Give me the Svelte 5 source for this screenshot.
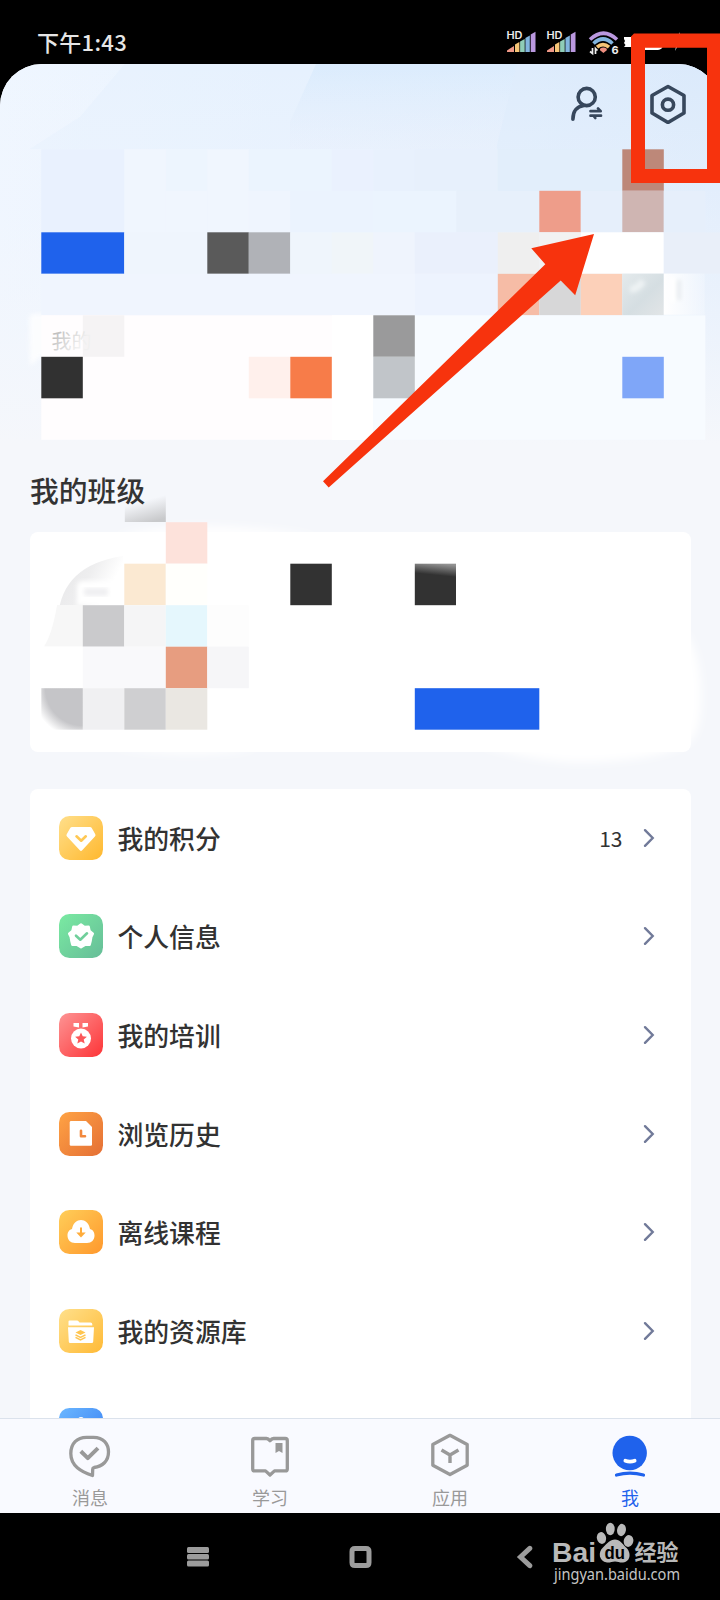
<script>
  const TILE = 41.5;

  // [column, row, columns wide, rows high, colour]
  const headerTiles = [
    [1, 0, 2, 2, "#e9f1fe"],
    [3, 0, 1, 2, "#f0f6fe"],
    [4, 0, 1, 1, "#edf5fe"],
    [4, 1, 1, 1, "#f0f6fe"],
    [5, 0, 1, 2, "#f0f6fe"],
    [6, 0, 2, 1, "#ebf4fe"],
    [6, 1, 1, 1, "#eff5fe"],
    [7, 1, 2, 1, "#ebf3fe"],
    [8, 0, 1, 1, "#eaf1fe"],
    [9, 0, 1, 1, "#e8f1fd"],
    [10, 0, 2, 1, "#e7f0fc"],
    [9, 1, 2, 1, "#ebf4fe"],
    [11, 1, 2, 1, "#e7f0fb"],
    [12, 0, 3, 1, "#e2eefb"],
    [13, 1, 1, 1, "#ee9d8a"],
    [14, 1, 1, 1, "#e6effb"],
    [15, 0, 1, 1, "#bd8879"],
    [15, 1, 1, 1, "#cfb5b2"],
    [16, 1, 1, 1, "#e6effb"],
    [1, 2, 2, 1, "#1f62ec"],
    [3, 2, 2, 1, "#eff5fd"],
    [5, 2, 1, 1, "#5a5a5a"],
    [6, 2, 1, 1, "#b0b2b7"],
    [7, 2, 1, 1, "#eff5fc"],
    [8, 2, 1, 1, "#f0f5f9"],
    [9, 2, 1, 1, "#eff4fd"],
    [10, 2, 2, 1, "#eaf0fc"],
    [12, 2, 1, 1, "#efefef"],
    [13, 2, 1, 1, "#f2f2f2"],
    [14, 2, 2, 1, "#ffffff"],
    [16, 2, 2, 1, "#e9eff9"],
    [1, 3, 9, 1, "#f0f5fe"],
    [10, 3, 2, 1, "#edf3fe"],
    [12, 3, 1, 1, "#f6bca6"],
    [13, 3, 1, 1, "#d7d7d8"],
    [14, 3, 1, 1, "#fcd0b9"],
    [1, 4, 8, 3, "#fffdfe"],
    [8, 4, 1, 3, "#ffffff"],
    [9, 4, 8, 3, "#f7fbff"],
    [2, 4, 1, 1, "#f5f3f4"],
    [9, 4, 1, 1, "#9a9a9b"],
    [1, 5, 1, 1, "#313131"],
    [6, 5, 1, 1, "#fff0ec"],
    [7, 5, 1, 1, "#f77c49"],
    [9, 5, 1, 1, "#c1c5c9"],
    [15, 5, 1, 1, "#7fa6f8"],
  ];

  const classTiles = [
    [4, 0, 1, 1, "#fde2db"],
    [3, 1, 1, 1, "#fbe9d2"],
    [4, 1, 1, 1, "#fffffc"],
    [7, 1, 1, 1, "#323232"],
    [2, 2, 1, 1, "#cacacc"],
    [3, 2, 1, 1, "#f5f5f6"],
    [4, 2, 1, 1, "#e5f7fd"],
    [5, 2, 1, 1, "#fdfdfd"],
    [1, 3, 1, 1, "#ffffff"],
    [2, 3, 2, 1, "#f9f9fb"],
    [4, 3, 1, 1, "#e79d80"],
    [5, 3, 1, 1, "#f6f6f8"],
    [2, 4, 1, 1, "#f0f0f2"],
    [3, 4, 1, 1, "#cfcfd1"],
    [4, 4, 1, 1, "#eae7e2"],
    [10, 4, 3, 1, "#1f62ec"],
  ];

  const menu = [
    { icon: "points", label: "我的积分", value: 13 },
    { icon: "profile", label: "个人信息" },
    { icon: "training", label: "我的培训" },
    { icon: "history", label: "浏览历史" },
    { icon: "offline", label: "离线课程" },
    { icon: "library", label: "我的资源库" },
    { icon: "more", label: "" },
  ];

  const gradients = {
    points: ["#ffdf8b", "#ffb82e"],
    profile: ["#7aeaa2", "#66bd98"],
    training: ["#fd9494", "#fd3437"],
    history: ["#ffa344", "#e46f35"],
    offline: ["#ffce59", "#ff982c"],
    library: ["#ffe08b", "#ffba36"],
    more: ["#6bb7ff", "#357cf2"],
  };

  const tabs = [
    { icon: "message", label: "消息" },
    { icon: "study", label: "学习" },
    { icon: "apps", label: "应用" },
    { icon: "me", label: "我", active: true },
  ];

  const signalX = [507, 547];
</script>

{#snippet tiles(list, top)}
  {#each list as [col, row, w, h, fill]}
    <rect
      x={col * TILE - 0.2}
      y={top + row * TILE}
      width={w * TILE}
      height={h * TILE}
      {fill}
    />
  {/each}
{/snippet}

<div class="screen">
  <header class="status">
    <span>下午1:43</span>
    <svg width="182" height="40" viewBox="504 24 182 40">
      {#each signalX as x}
        <g transform="translate({x} 0)">
          <path fill="#ef9887" d="M0 52v-1.500l7-4.500v6z" />
          <path fill="#f5c577" d="M8 52v-7.500l4.400-2.500v10z" />
          <path fill="#8fcdb7" d="M13.100 52V41.500l4.600-2.500v13z" />
          <path fill="#82b5df" d="M18.400 52V38l4.400-2.500V52z" />
          <path fill="#ba98df" d="M23.700 52V34.500l4.800-2.700V52z" />
          <text class="hd" x="-0.500" y="39" textLength="16" lengthAdjust="spacingAndGlyphs">HD</text>
        </g>
      {/each}
      <g fill="none" stroke-width="3.600">
        <path stroke="#ba98df" d="M590 39.500q13.500-12.500 27 0" />
        <path stroke="#82b5df" d="M593.500 43.500q9.500-9 19 0" />
        <path stroke="#f5c577" d="M597 47.200q6-5.200 12 0" />
      </g>
      <path fill="#ef8f80" d="M600 48.800q3.400-2.400 6.800 0v1.400L603.400 53l-3.400-2.800z" />
      <path
        fill="none"
        stroke="#eee"
        stroke-width="1.700"
        d="M592.500 48v5.500l-2.500-2M595.500 54v-5.500l2 2"
      />
      <text class="wifi-gen" x="611.500" y="53.500">6</text>
      <path fill="#fff" d="M624 37h8v10h-8l1.500-2-1.500-2 1-2-1-2z" />
      <rect x="632" y="35" width="31" height="15" rx="5" fill="#fff" />
      <path fill="#ddd" d="m680 32-6 10h3l-2 9 6-11h-3z" />
    </svg>
  </header>

  <main>
    <svg class="backdrop" width="720" height="1354" viewBox="0 64 720 1354">
      <defs>
        <linearGradient id="sky">
          <stop offset="0" stop-color="#eff6ff" />
          <stop offset="0.5" stop-color="#e7f2fe" />
          <stop offset="1" stop-color="#dceafb" />
        </linearGradient>
        <linearGradient id="sky-fade" x2="0" y2="1">
          <stop offset="0" stop-color="#f5f7fb" stop-opacity="0" />
          <stop offset="0.35" stop-color="#f1f6fe" stop-opacity="0.35" />
          <stop offset="1" stop-color="#f5f7fb" />
        </linearGradient>
        <linearGradient id="band" x2="0" y2="1">
          <stop offset="0" stop-color="#dbecfd" />
          <stop offset="1" stop-color="#e5eefc" stop-opacity="0.6" />
        </linearGradient>
        <linearGradient id="smudge" x2="1">
          <stop offset="0" stop-color="#fff" />
          <stop offset="1" stop-color="#fff" stop-opacity="0.2" />
        </linearGradient>
        <linearGradient id="silver" x2="1" y2="1">
          <stop offset="0" stop-color="#e4eaec" />
          <stop offset="0.55" stop-color="#d5dee2" />
          <stop offset="1" stop-color="#e2e5e7" />
        </linearGradient>
        <linearGradient id="text-fade" x2="1" y2="0.6">
          <stop offset="0" stop-color="#b0b0b0" />
          <stop offset="0.8" stop-color="#f0f0f0" />
        </linearGradient>
        <filter id="soft-small"><feGaussianBlur stdDeviation="2" /></filter>
      </defs>
      <rect y="64" width="720" height="380" fill="url(#sky)" />
      <path fill="#e3effd" opacity="0.5" d="M125 64h191l-26 58v27H30L80 117z" />
      <path fill="url(#band)" d="M316 64h201l-20 80v5H290v-27z" />
      <path fill="#d9e9fc" opacity="0.5" d="M517 64h203v127H497v-46z" />
      <rect y="64" width="720" height="380" fill="url(#sky-fade)" />
      <path
        fill="#fff"
        d="M29.500 318q0-4 4-4H120v42H41l-11 10z"
        filter="url(#soft-small)"
        opacity="0.8"
      />
      {@render tiles(headerTiles, 149.3)}
      <rect x="622.300" y="273.600" width="41.500" height="41.500" fill="url(#silver)" />
      <rect x="663.800" y="273.600" width="41" height="41.200" fill="url(#smudge)" />
      <g filter="url(#soft-small)">
        <path stroke="#fff" stroke-width="6" d="M673 278v24" />
        <path stroke="#e0e5e9" stroke-width="3" d="M679 280v20" />
        <path stroke="#eef3f4" stroke-width="7" d="M630 289q7 1 13-8" fill="none" />
      </g>
      <text class="ghost" x="51.500" y="349" fill="url(#text-fade)">我的</text>
    </svg>

    <div class="toolbar">
      <svg width="40" height="40" viewBox="567 84 40 40" class="line">
        <circle cx="586.700" cy="97" r="8.600" />
        <path d="M572.900 119.300c0-8 4-13 11-13.800" />
        <path
          stroke-width="2.700"
          d="M590.500 111.200h10.200l-2.700-2.800M601 115.700h-10.500M593.500 115.700l1.800 2.300"
        />
      </svg>
      <svg width="40" height="40" viewBox="648 84 40 40" class="line">
        <path d="m668 86.500 16 9V113l-16 9.500-16-9.500V95.500z" />
        <circle cx="668" cy="104.700" r="5.600" />
      </svg>
    </div>

    <h2>我的班级</h2>

    <section class="class-card">
      <svg class="class-art" width="720" height="280" viewBox="0 490 720 280">
        <defs>
          <linearGradient id="shade" x1="0.3" y1="0" x2="0.65" y2="1">
            <stop offset="0.35" stop-color="#f5f7fb" />
            <stop offset="1" stop-color="#c8c9cb" />
          </linearGradient>
          <linearGradient id="ring" x2="1" y2="0.5">
            <stop offset="0" stop-color="#e6e6e8" />
            <stop offset="0.5" stop-color="#eeeeef" />
            <stop offset="0.85" stop-color="#fff" />
          </linearGradient>
          <radialGradient id="corner" cx="1" cy="0" r="1.25">
            <stop offset="0.72" stop-color="#c5c5c8" />
            <stop offset="0.98" stop-color="#fff" />
          </radialGradient>
          <linearGradient id="ink" x1="0.6" y1="0" x2="0.5" y2="1">
            <stop offset="0" stop-color="#929292" />
            <stop offset="0.28" stop-color="#323232" />
          </linearGradient>
          <filter id="soft" x="-20%" y="-20%" width="140%" height="140%">
            <feGaussianBlur stdDeviation="4" />
          </filter>
        </defs>
        <g fill="#fff" filter="url(#soft)">
          <path d="M115 537q70-22 205 0z" />
          <path d="M110 747q90 14 150 0z" />
          <path d="M480 745q70 22 130 16 60-4 80-20 11-10 11-45 0-42-16-64l-30 80z" />
        </g>
        <rect x="124.800" y="490" width="41" height="32" fill="url(#shade)" />
        <path fill="url(#ring)" d="M58 617q4-52 65-61v49H83v12z" />
        <path
          fill="#fff"
          filter="url(#soft-small)"
          d="M77 587q0-6 6-6h42v24H77z"
        />
        <rect
          x="84"
          y="588"
          width="24"
          height="8"
          rx="2"
          fill="#efeff1"
          filter="url(#soft-small)"
        />
        <path fill="#f7f7f7" d="M57 605h26v41.500H44q8-12 13-41z" />
        {@render tiles(classTiles, 522.2)}
        <rect x="41.300" y="688.200" width="41.500" height="41.500" fill="url(#corner)" />
        <rect x="414.800" y="563.700" width="41.200" height="41.500" fill="url(#ink)" />
      </svg>
    </section>

    <ul class="menu">
      {#each menu as { icon, label, value }}
        <li>
          <svg class="app-icon" width="44" height="44" viewBox="0 0 44 44">
            <defs>
              <linearGradient id={`fill-${icon}`} x2="1" y2="1">
                <stop offset="0" stop-color={gradients[icon][0]} />
                <stop offset="1" stop-color={gradients[icon][1]} />
              </linearGradient>
            </defs>
            <rect width="44" height="44" rx="10.500" fill={`url(#fill-${icon})`} />
            {#if icon === "points"}
              <path
                fill="#fff"
                d="M13 11h18q1 0 1.600.8l3.700 6.400q.6 1.200-.4 2.300L23.200 34.300q-1.200 1.200-2.400 0L8 20.500q-1-1.100-.3-2.300l3.700-6.400Q12 11 13 11z"
              />
              <path class="mark" stroke="#ffc853" d="m17.500 20.300 4.700 4.400 4.600-4.400" />
            {:else if icon === "profile"}
              <path
                fill="#fff"
                stroke="#fff"
                stroke-width="2.500"
                stroke-linejoin="round"
                d="m22 10.500 3.400 2.500 4.200-.2.900 4.100 3.300 2.900-1.600 3.200-.7 4.200-.9 3.600-4.400-.2-4.200 2.600-4.200-2.600-4.400.2-.9-3.600-.7-4.200-1.600-3.200 3.300-2.900.9-4.100 4.200.2z"
              />
              <path class="mark" stroke="#70cf9b" d="m17 21.700 4.300 4 6.700-6.400" />
            {:else if icon === "training"}
              <path fill="#fff" d="M14.500 10H20v4.500l-5.500-1zM23.500 10H29v3.500l-5.500 1z" />
              <circle cx="22" cy="25.500" r="10" fill="#fff" />
              <path
                fill="#fc5759"
                d="m22 19.500 1.700 3.800 4.200.4-3.200 2.700 1 4.200-3.700-2.200-3.700 2.200 1-4.200-3.200-2.700 4.200-.4z"
              />
            {:else if icon === "history"}
              <path
                fill="#fff"
                d="M11.500 9H27l6 6v17.500q0 1.300-1.300 1.300H12q-1.300 0-1.300-1.300V10z"
              />
              <path class="mark" stroke="#f2883d" d="M22 18.800v5.400h4" />
            {:else if icon === "offline"}
              <path
                fill="#fff"
                d="M13 19C14 13 18 10 22 10s8 3 9 9c3.500 1 4.500 4 4.500 6.500 0 4.500-3 7.500-7.500 7.500H16c-4.500 0-7.500-3-7.500-7.500C8.500 23 9.500 20 13 19z"
              />
              <path stroke="#ffac3a" stroke-width="2" d="M22 17.500V24" />
              <path fill="#ffac3a" d="M17.300 22.500h9.400L22 27.500z" />
            {:else if icon === "library"}
              <path
                fill="#fff"
                d="M10.500 11.500h7.500q1 0 1.700 1l.8 1h11q1.800 0 1.800 1.800v1.300H9.500v-4q0-1.100 1-1.100zM9 18.200h26l-.8 14.500q-.1 1.200-1.400 1.200H11.200q-1.300 0-1.400-1.200z"
              />
              <path fill="#ffc54f" d="m21.500 21 5 2.500-5 2.600-5-2.600z" />
              <path
                fill="none"
                stroke="#ffc54f"
                stroke-width="1.500"
                d="m16.500 25.800 5 2.500 5-2.500M16.500 28.300l5 2.500 5-2.500"
              />
            {:else}
              <circle cx="22" cy="12" r="3" fill="#fff" />
            {/if}
          </svg>
          <span class="label">{label}</span>
          {#if value}<span class="value">{value}</span>{/if}
          <svg class="chevron" width="12" height="20" viewBox="0 0 12 20">
            <path d="m2 2.200 7.700 7.800L2 17.800" />
          </svg>
        </li>
      {/each}
    </ul>
  </main>

  <nav class="tabs">
    {#each tabs as { icon, label, active }}
      <div class="tab" class:active>
        <svg width="48" height="48" viewBox="0 0 48 48">
          {#if icon === "message"}
            <path
              d="M20.500 5.300h7C37.500 5.300 42.500 12 42.500 20c0 9-6 14.500-14.500 15.500q-1.300.3-1.300 1.700L26.500 43.500C15 39.500 4.800 34 4.800 21.500 4.800 11.500 11 5.300 20.500 5.300z"
            />
            <path stroke-width="4" d="m14.800 19.300 7 6.800 10.200-10" />
          {:else if icon === "study"}
            <path
              d="M8.700 6.500h11.800q1.800 0 3.500 2.200 1.700-2.200 3.500-2.200h11.800q2 0 2 2v28.400q0 2-2 2H28.500L24 43l-4.500-4.100H8.700q-2 0-2-2V8.500q0-2 2-2z"
            />
            <path class="solid" d="M29.500 11h7v10L33 19l-3.500 2z" />
          {:else if icon === "apps"}
            <path d="m24 3.300 17.200 9.200v20.800L24 42.500 6.800 33.300V12.500z" />
            <path d="m15.500 18 8.500 5 8.500-5M24 23v8" stroke-width="3.400" />
          {:else}
            <circle class="solid" cx="23.700" cy="21" r="17.200" />
            <path class="smile" d="M19.300 28.700q4.700 1.800 9.400 0" />
            <path stroke-width="3.200" d="M10.500 43q13.500-3.600 27 0" stroke-linecap="round" />
          {/if}
        </svg>
        <span>{label}</span>
      </div>
    {/each}
  </nav>

  <footer class="system-nav">
    <svg width="24" height="24" viewBox="0 0 24 24">
      <rect x="1" y="2" width="22" height="6" rx="1.500" />
      <rect x="1" y="9" width="22" height="5.500" rx="1.500" />
      <rect x="1" y="15.600" width="22" height="5.800" rx="1.500" />
    </svg>
    <svg width="24" height="24" viewBox="0 0 24 24">
      <path class="outline" d="M6 3.400h11q3 0 3 3v11q0 3-3 3H6q-3 0-3-3v-11q0-3 3-3z" />
    </svg>
    <svg width="24" height="24" viewBox="0 0 24 24">
      <path class="outline" d="M17.800 3.300 8.500 12l9.300 8.700" stroke-linecap="round" />
    </svg>
  </footer>

  <svg class="overlay" width="720" height="1600" viewBox="0 0 720 1600">
    <g fill="#f7330d">
      <path fill-rule="evenodd" d="M634 33.500h86V183h-89V36.500zM645 47.700V169h62V47.700z" />
      <path d="M594 234 575.200 295.300 560.700 280.500 328.700 487.500 323 481.300 545.300 264.300 531.300 248.300z" />
    </g>
    <g fill="#b9b9b9">
      <text class="brand" x="552" y="1562" textLength="44" lengthAdjust="spacingAndGlyphs">Bai</text>
      <ellipse cx="601.500" cy="1538" rx="4.600" ry="6" transform="rotate(-12 601.500 1538)" />
      <ellipse cx="610.300" cy="1529" rx="4.400" ry="6.200" />
      <ellipse cx="621.500" cy="1530" rx="4.400" ry="6.200" transform="rotate(10 621.500 1530)" />
      <ellipse cx="628.500" cy="1541" rx="4.800" ry="6" transform="rotate(12 628.500 1541)" />
      <path
        d="M615 1539.500c5 0 7 4 11 8 5 4 5.500 14-3 15-3 .3-5-1-8-1s-5 1.300-8 1c-8.500-1-9-11-4-15 4-4 7-8 12-8z"
      />
      <text class="du" x="604.500" y="1559" textLength="20.500" lengthAdjust="spacingAndGlyphs">du</text>
      <text class="brand-cn" x="634.500" y="1560" textLength="44">经验</text>
    </g>
    <text class="url" x="554" y="1580" textLength="126" lengthAdjust="spacingAndGlyphs">jingyan.baidu.com</text>
  </svg>
</div>

<style>
  :global(body) {
    background: #000;
  }

  .screen {
    background: #000;
    display: flex;
    flex-direction: column;
    font-family: "Noto Sans CJK SC", "Noto Sans", sans-serif;
    height: 1600px;
    overflow: hidden;
    position: relative;
    width: 720px;
  }

  svg {
    display: block;
    flex: none;
  }

  .status {
    align-items: flex-end;
    box-sizing: border-box;
    color: #e6e6e6;
    display: flex;
    flex: none;
    font-size: 22px;
    font-weight: 500;
    height: 64px;
    justify-content: space-between;
    letter-spacing: 0.3px;
    line-height: 40px;
    padding: 0 34px 0 37px;
  }

  .status span {
    padding-bottom: 3px;
  }

  .hd {
    fill: #eee;
    font: 600 10px Inter, sans-serif;
    letter-spacing: 0;
  }

  .wifi-gen {
    fill: #eee;
    font: 700 11px Inter, sans-serif;
    letter-spacing: 0;
  }

  main {
    background: #f5f7fb;
    border-radius: 42px 42px 0 0;
    flex: none;
    height: 1354px;
    overflow: hidden;
    position: relative;
  }

  .backdrop {
    left: 0;
    position: absolute;
    top: 0;
  }

  .ghost {
    font-size: 20px;
  }

  .toolbar {
    display: flex;
    gap: 41px;
    height: 384px;
    justify-content: flex-end;
    padding: 20px 32px 0 0;
    position: relative;
  }

  .line {
    fill: none;
    stroke: #37475c;
    stroke-linecap: round;
    stroke-linejoin: round;
    stroke-width: 3.6;
  }

  h2 {
    color: #333;
    font-size: 28.8px;
    font-weight: 500;
    line-height: 44px;
    margin: 0 0 20px 30px;
    position: relative;
    z-index: 1;
  }

  .class-card {
    background: #fff;
    border-radius: 8px;
    height: 220px;
    margin: 0 29px 36.5px 29.5px;
    position: relative;
  }

  .class-art {
    left: -29.5px;
    position: absolute;
    top: -42px;
  }

  .menu {
    background: #fff;
    border-radius: 8px;
    list-style: none;
    margin: 0 29px 0 29.5px;
    padding: 0;
    position: relative;
  }

  .menu li {
    align-items: center;
    box-sizing: border-box;
    display: flex;
    height: 98.65px;
    padding: 0 36.5px 0 29px;
  }

  .label {
    color: #323232;
    flex: 1;
    font-size: 25.8px;
    font-weight: 500;
    line-height: 40px;
    padding-left: 15px;
  }

  .value {
    color: #323232;
    font-size: 21px;
    margin-right: 20px;
  }

  .mark {
    fill: none;
    stroke-linecap: round;
    stroke-linejoin: round;
    stroke-width: 2.6;
  }

  .chevron path {
    fill: none;
    stroke: #717a99;
    stroke-linecap: round;
    stroke-width: 2.4;
  }

  .tabs {
    background: #f9faff;
    border-top: 1px solid #dbe2ec;
    box-sizing: border-box;
    display: flex;
    flex: none;
    height: 95px;
    position: relative;
  }

  .tab {
    align-items: center;
    color: #999;
    display: flex;
    flex: 1;
    flex-direction: column;
    font-size: 18px;
    line-height: 24px;
    padding-top: 13px;
  }

  .tab.active {
    color: #1f62ec;
  }

  .tab span {
    margin-top: 5px;
  }

  .tab svg {
    fill: none;
    stroke: currentColor;
    stroke-linejoin: round;
    stroke-width: 3.3;
  }

  .tab .solid {
    fill: currentColor;
    stroke: none;
  }

  .tab .smile {
    stroke: #fff;
    stroke-linecap: round;
    stroke-width: 3.6;
  }

  .system-nav {
    align-items: center;
    display: flex;
    flex: none;
    gap: 139px;
    height: 87px;
    padding-left: 186px;
  }

  .system-nav svg {
    fill: #9c9c9c;
  }

  .system-nav .outline {
    fill: none;
    stroke: #9c9c9c;
    stroke-width: 5;
  }

  .overlay {
    left: 0;
    pointer-events: none;
    position: absolute;
    top: 0;
  }

  .brand {
    font: 700 28px "Liberation Sans", sans-serif;
  }

  .du {
    fill: #000;
    font: 700 18px "Liberation Sans", sans-serif;
  }

  .brand-cn {
    font-size: 22px;
    font-weight: 700;
  }

  .url {
    fill: #c4c4c4;
    font: 400 16px "Noto Sans", sans-serif;
  }
</style>
